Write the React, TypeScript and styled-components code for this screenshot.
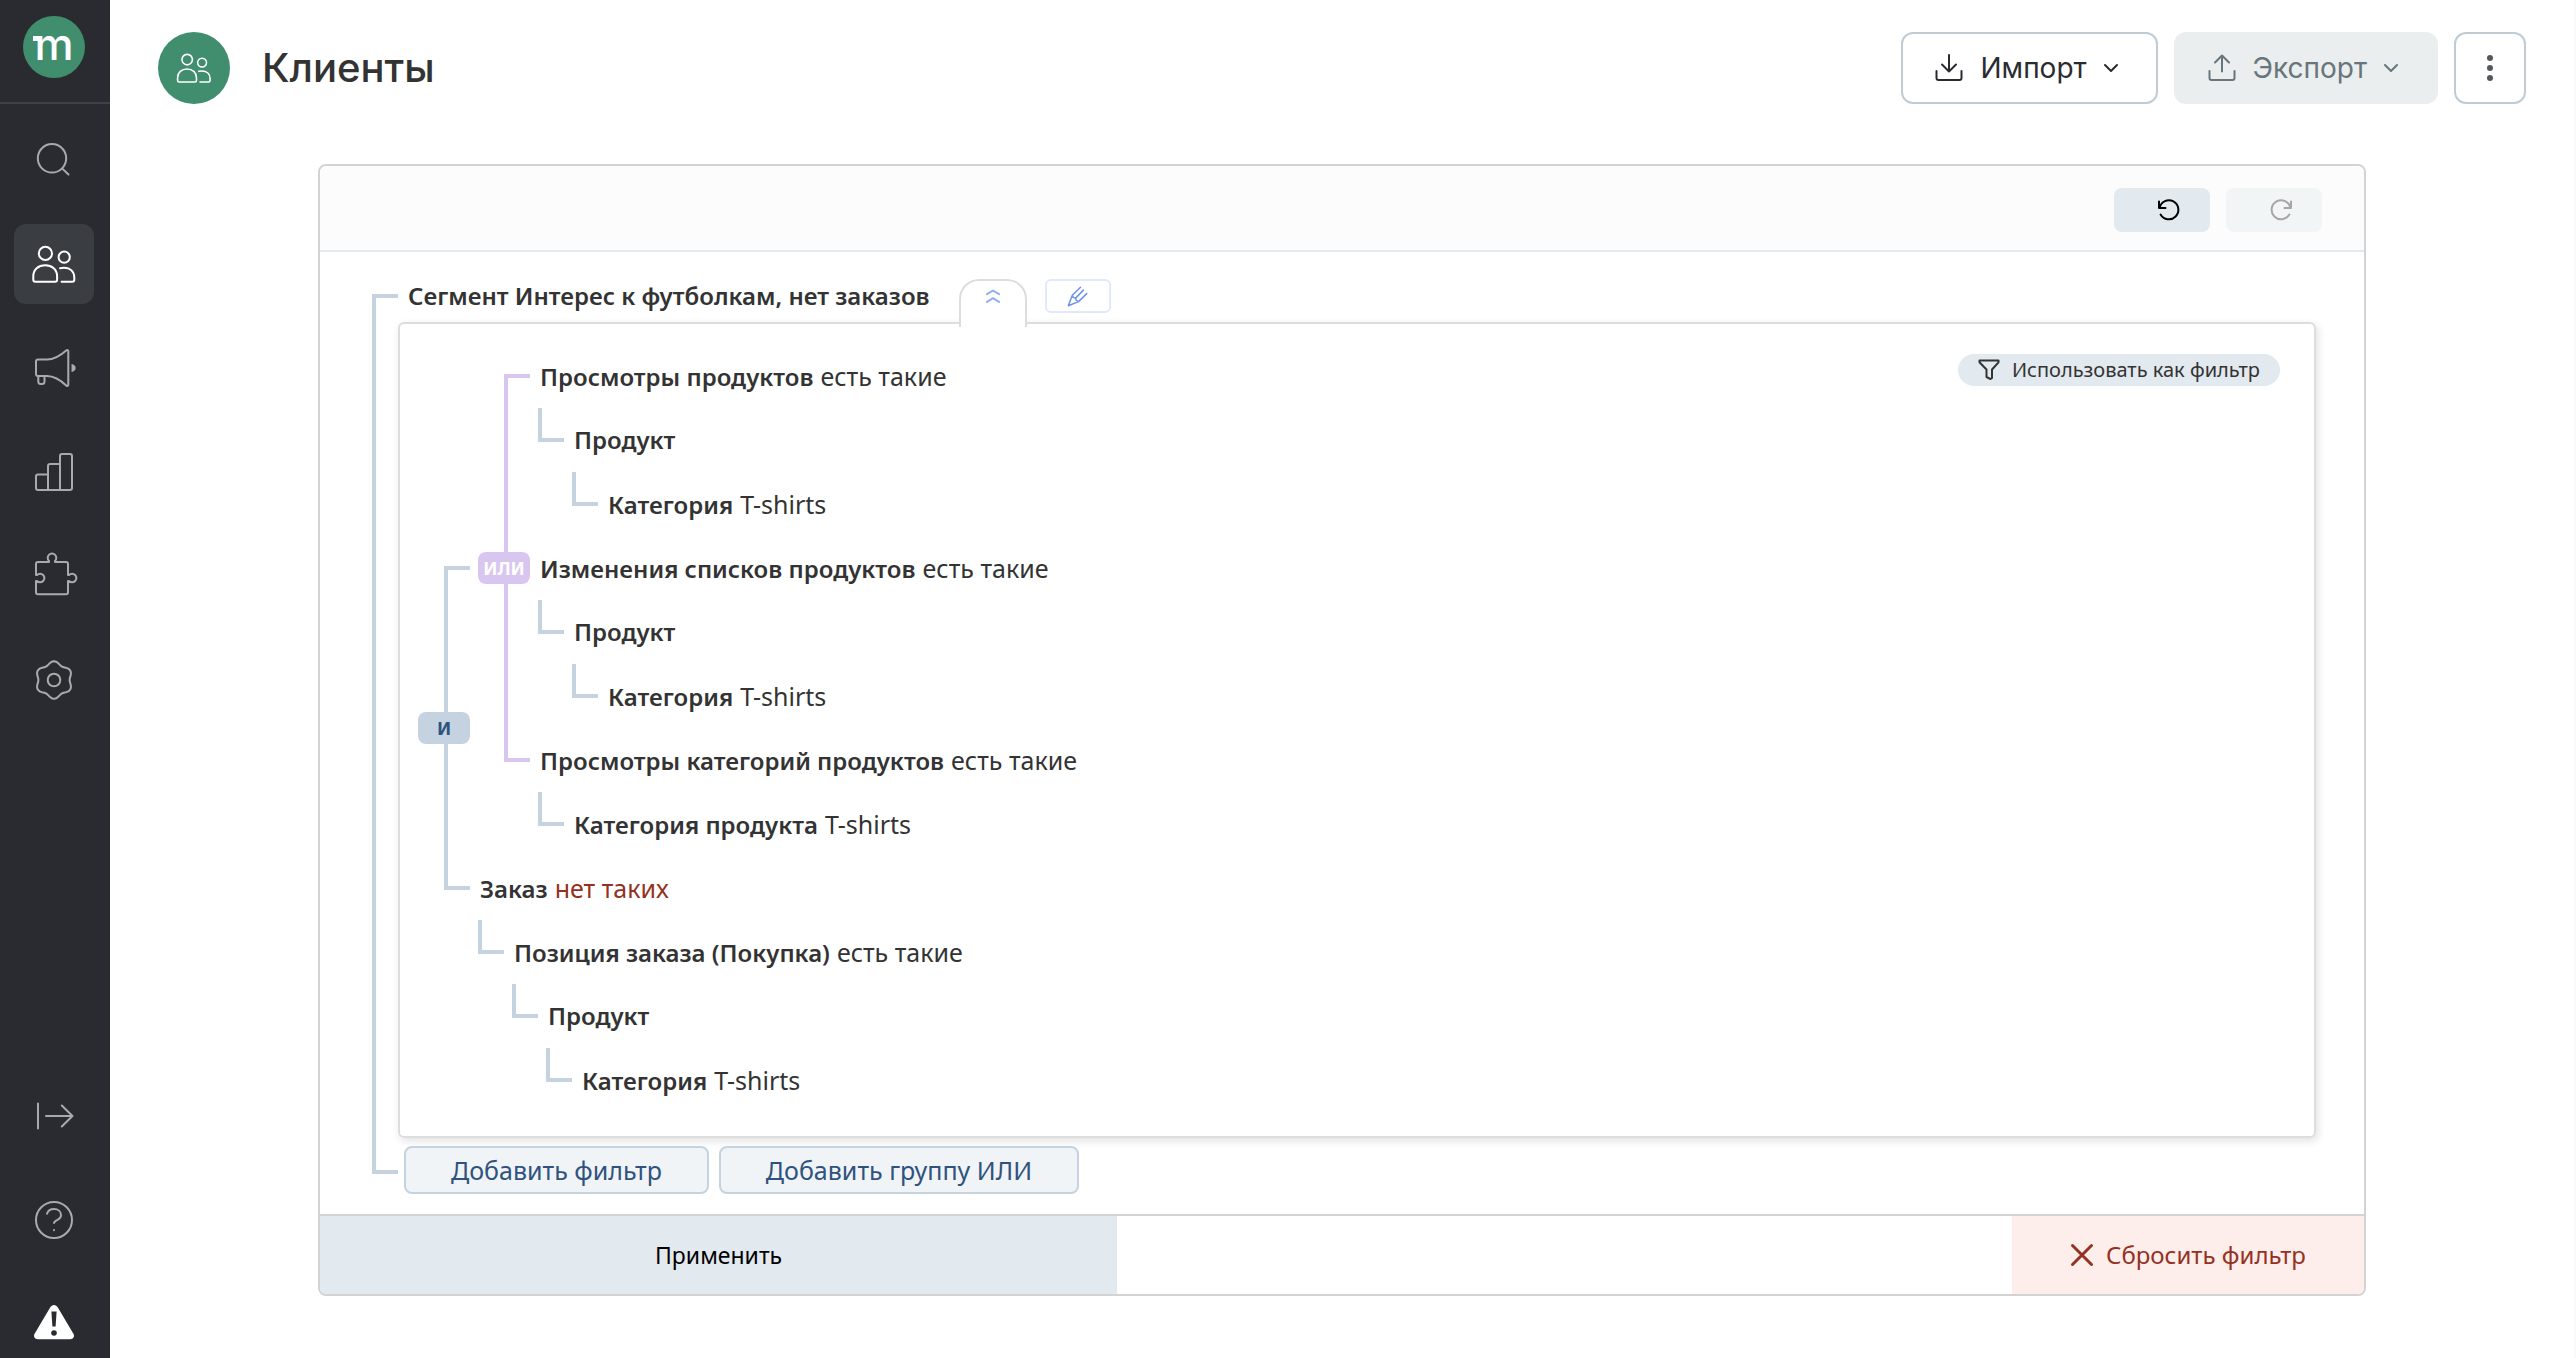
import React, { Fragment } from 'react';
import styled, { createGlobalStyle } from 'styled-components';

const ROW = 64;

const color = {
  ink: '#333333',
  line: '#c5d3e0',
  or: '#d9c6f0',
  blue: '#2f537e',
  mist: '#e2e9ef',
  danger: '#943123',
  green: '#418e6f',
};

const GlobalStyle = createGlobalStyle`
  * { box-sizing: border-box; }
  body { margin: 0; background: #fff; color: ${color.ink}; }
  button { font: inherit; color: inherit; border: 0; margin: 0; padding: 0; cursor: pointer; }
`;

const ui = `Inter, Roboto, sans-serif`;
const text = `"Noto Sans", "Open Sans", sans-serif`;

const Shell = styled.div`
  display: flex;
  min-height: 100vh;
  font: 400 24px/32px ${text};
`;

/* ---------- sidebar ---------- */

const Sidebar = styled.nav`
  display: flex;
  flex-direction: column;
  flex: none;
  width: 110px;
  background: #2a2b30;
`;

const LogoBar = styled.div`
  height: 104px;
  padding: 16px 0 0 23px;
  border-bottom: 2px solid #3e4147;
`;

const Logo = styled.a`
  display: flex;
  justify-content: center;
  position: relative;
  width: 62px;
  height: 62px;
  border-radius: 50%;
  background: ${color.green};
  color: #fff;
  font: 500 44px/56px ${ui};
  text-decoration: none;

  &::before {
    content: '';
    position: absolute;
    left: 10px;
    top: 20px;
    width: 8px;
    height: 5px;
    background: #fff;
  }
`;

const NavList = styled.div`
  display: flex;
  flex-direction: column;
  gap: 24px;
  padding: 16px 16px 0 14px;
`;

const NavFoot = styled(NavList)`
  gap: 36px;
  margin-top: auto;
  padding-top: 0;
`;

const NavButton = styled.button<{ $active?: boolean; $short?: boolean }>`
  display: grid;
  place-items: center;
  height: ${(p) => (p.$short ? 68 : 80)}px;
  border-radius: 12px;
  background: ${(p) => (p.$active ? '#3a3d42' : 'transparent')};
  color: ${(p) => (p.$active ? '#fff' : '#a8aaad')};
`;

const Icon = styled.svg<{ $size: number }>`
  display: block;
  flex: none;
  width: ${(p) => p.$size}px;
  height: ${(p) => p.$size}px;
  fill: none;
  stroke: currentColor;
  stroke-width: 2;
  stroke-linecap: round;
  stroke-linejoin: round;
`;

const gearPath =
  Array.from({ length: 72 }, (_, i) => {
    const a = (i / 72) * Math.PI * 2;
    const r = 17.2 + 1.6 * Math.cos(6 * a);
    return `${i ? 'L' : 'M'}${(24 + r * Math.sin(a)).toFixed(2)} ${(24 - r * Math.cos(a)).toFixed(2)}`;
  }).join('') + 'Z';

const glyphs = {
  search: (
    <>
      <circle cx="22" cy="22.3" r="14.2" />
      <path d="M32.3 32.6 38.5 38.5" />
    </>
  ),
  people: (
    <>
      <circle cx="15.4" cy="13.4" r="6.6" />
      <path d="M5.3 41.7h19.8a2 2 0 0 0 2-2v-3.5c0-6.6-5-10.9-11.9-10.9S3.3 29.6 3.3 36.2v3.5a2 2 0 0 0 2 2Z" />
      <circle cx="34.2" cy="17.2" r="5.6" />
      <path d="M30 28.2c1.3-.4 2.6-.5 4-.5 6.2 0 10.3 3.9 10.3 9.8v2.2a2 2 0 0 1-2 2H31.6" />
    </>
  ),
  megaphone: (
    <>
      <path d="M8 15.5h9c8 0 14-4.4 19.5-9.3a1.1 1.1 0 0 1 1.8.8v34a1.1 1.1 0 0 1-1.8.8C31 36.5 25 32 17 32H8a2 2 0 0 1-2-2V17.5a2 2 0 0 1 2-2Z" />
      <path d="M8.3 32v5.5a2.5 2.5 0 0 0 2.5 2.5h1.2a2.5 2.5 0 0 0 2.5-2.5V32" />
      <path d="M41.5 20c5.5.5 5.5 7.5 0 8Z" fill="currentColor" stroke="none" />
    </>
  ),
  chart: (
    <path d="M18 42V18a2 2 0 0 1 2-2h10M30 42V8a2 2 0 0 1 2-2h8a2 2 0 0 1 2 2v32a2 2 0 0 1-2 2H8a2 2 0 0 1-2-2V28.5a2 2 0 0 1 2-2h10" />
  ),
  puzzle: (
    <path d="M8 10h11V9a4.3 4.3 0 1 1 6 0v1h11a2 2 0 0 1 2 2v11h1a4.3 4.3 0 1 1 0 6h-1v11.3a2 2 0 0 1-2 2H8a2 2 0 0 1-2-2V29h1a4.3 4.3 0 1 0 0-6H6V12a2 2 0 0 1 2-2Z" />
  ),
  gear: (
    <>
      <path d={gearPath} />
      <circle cx="24" cy="24" r="6.3" />
    </>
  ),
  expand: <path d="M8 11.5v25M16 24h26.5M31.8 13.5 42.5 24 31.8 34.5" />,
  help: (
    <>
      <circle cx="24" cy="24" r="18" />
      <path d="M17 17.8c1-3 3.700-4.800 7-4.800 4 0 7 2.400 7 6.100 0 4.300-3.600 4.600-5.600 6-.8.6-1.200 1-1.400 1.900M24 34v.2" />
    </>
  ),
  warning: (
    <>
      <path
        d="M20.3 7.2a4.3 4.3 0 0 1 7.4 0L43.4 33.7c1.6 2.7-.3 5.500-3.300 5.500H7.900c-3 0-4.900-2.800-3.300-5.500Z"
        fill="#fff"
        stroke="none"
      />
      <path d="M21.4 11.5h5.200l-1 15h-3.200Z" fill="#2a2b30" stroke="none" />
      <circle cx="24" cy="33" r="2.8" fill="#2a2b30" stroke="none" />
    </>
  ),
};

type GlyphName = keyof typeof glyphs;

const Glyph = ({ name, size = 48 }: { name: GlyphName; size?: number }) => (
  <Icon $size={size} viewBox="0 0 48 48" aria-hidden="true">
    {glyphs[name]}
  </Icon>
);

const mainNav: { name: GlyphName; label: string; active?: boolean }[] = [
  { name: 'search', label: 'Поиск' },
  { name: 'people', label: 'Клиенты', active: true },
  { name: 'megaphone', label: 'Кампании' },
  { name: 'chart', label: 'Отчёты' },
  { name: 'puzzle', label: 'Интеграции' },
  { name: 'gear', label: 'Настройки' },
];

const footNav: { name: GlyphName; label: string }[] = [
  { name: 'expand', label: 'Развернуть меню' },
  { name: 'help', label: 'Помощь' },
  { name: 'warning', label: 'Предупреждения' },
];

/* ---------- header ---------- */

const Main = styled.main`
  flex: 1;
  min-width: 0;
  border-right: 2px solid #fafafa;
`;

const Header = styled.header`
  display: flex;
  align-items: center;
  gap: 16px;
  padding: 32px 48px 0;
  font-family: ${ui};
`;

const HeaderBadge = styled.span`
  display: grid;
  place-items: center;
  width: 72px;
  height: 72px;
  border-radius: 50%;
  background: ${color.green};
  color: #fff;
`;

const Title = styled.h1`
  margin: 0 auto 0 16px;
  font: 500 40px/48px ${ui};
`;

const HeaderButton = styled.button<{ $muted?: boolean; $square?: boolean }>`
  display: flex;
  align-items: center;
  justify-content: ${(p) => (p.$square ? 'center' : 'flex-start')};
  gap: 17px;
  height: 72px;
  width: ${(p) => (p.$square ? '72px' : 'auto')};
  padding: ${(p) => (p.$square ? '0' : '0 38px 0 32px')};
  border: 2px solid ${(p) => (p.$muted ? '#eaeeef' : '#bfccd6')};
  border-radius: 12px;
  background: ${(p) => (p.$muted ? '#eaeeef' : '#fff')};
  color: ${(p) => (p.$muted ? '#68757b' : '#2a2b30')};
  font-size: 28px;
  line-height: 36px;
`;

const Tray = ({ up }: { up?: boolean }) => (
  <Icon $size={28} viewBox="0 0 28 28" aria-hidden="true">
    <path d="M1.5 17v7a2 2 0 0 0 2 2h21a2 2 0 0 0 2-2v-7" />
    <path d={up ? 'M14 17.5V1.500M7 8.500l7-7 7 7' : 'M14 1v16.500M7 10.500l7 7 7-7'} />
  </Icon>
);

const Chevron = () => (
  <Icon $size={14} viewBox="0 0 14 14" aria-hidden="true">
    <path d="M1 4l6 6 6-6" />
  </Icon>
);

/* ---------- filter panel ---------- */

const Panel = styled.section`
  max-width: 2048px;
  margin: 60px auto 0;
  border: 2px solid #d3d3d3;
  border-radius: 8px;
  overflow: hidden;
`;

const Toolbar = styled.div`
  display: flex;
  justify-content: flex-end;
  gap: 16px;
  padding: 22px 42px 18px;
  border-bottom: 2px solid ${color.mist};
  background: #fcfcfc;
`;

const HistoryButton = styled.button`
  display: grid;
  place-items: center;
  width: 96px;
  height: 44px;
  padding-left: 14px;
  border-radius: 8px;
  background: ${color.mist};
  color: #000;

  &:disabled {
    background: #f2f5f6;
    color: #a6a6a6;
  }
`;

const Turn = ({ redo }: { redo?: boolean }) => (
  <Icon $size={24} viewBox="0 0 24 24" aria-hidden="true">
    <g transform={redo ? 'translate(24 0) scale(-1 1)' : undefined}>
      <path d="M2 3.500v6.500h6.500M2.600 9.700A9.500 9.500 0 1 1 3.600 16.500" />
    </g>
  </Icon>
);

const Body = styled.div`
  display: flex;
  padding: 0 48px 0 52px;
`;

const Bracket = styled.div<{ $or?: boolean }>`
  position: relative;
  flex: none;
  width: 26px;
  border: 4px solid ${(p) => (p.$or ? color.or : color.line)};
  border-right: 0;
`;

const RootBracket = styled(Bracket)`
  margin: 42px 0 40px;
`;

const Segment = styled.div`
  flex: 1;
  min-width: 0;
`;

const SegmentHead = styled.div`
  display: flex;
  align-items: flex-start;
  height: 70px;
  padding: 27px 0 0 10px;
`;

const SegmentTitle = styled.h2`
  margin: 0 29px 0 0;
  font: 600 24px/34px ${text};
`;

const CollapseTab = styled.button`
  display: flex;
  justify-content: center;
  position: relative;
  width: 68px;
  height: 48px;
  padding-top: 8px;
  margin-right: 18px;
  border: 2px solid #dddddd;
  border-bottom: 0;
  border-radius: 20px 20px 0 0;
  background: #fff;
  color: #8fb0ee;
`;

const EditButton = styled.button`
  display: grid;
  place-items: center;
  width: 66px;
  height: 34px;
  border: 2px solid #e0eafc;
  border-radius: 6px;
  background: #fff;
  color: #6b93e6;
`;

const Card = styled.div`
  display: flex;
  justify-content: space-between;
  align-items: flex-start;
  padding: 20px 34px 24px 18px;
  border: 2px solid #dddddd;
  border-radius: 6px;
  box-shadow: 2px 3px 8px rgba(0, 0, 0, 0.12);
`;

const UseAsFilter = styled.button`
  display: flex;
  align-items: center;
  gap: 12px;
  height: 32px;
  margin-top: 10px;
  padding: 0 20px;
  border-radius: 16px;
  background: ${color.mist};
  font-size: 20px;
  line-height: 32px;
`;

const Group = styled.div`
  display: flex;
  gap: 8px;
`;

const Gutter = styled.div`
  display: flex;
  justify-content: flex-end;
  align-items: flex-start;
  width: 52px;
`;

const Operator = styled.span<{ $or?: boolean }>`
  position: absolute;
  right: 0;
  top: calc(50% - 16px);
  width: 52px;
  height: 32px;
  border-radius: 8px;
  background: ${(p) => (p.$or ? color.or : color.line)};
  color: ${(p) => (p.$or ? '#fff' : color.blue)};
  font: 700 18px/32px ${text};
  text-align: center;
`;

const Elbow = styled.span`
  flex: none;
  width: 26px;
  height: 34px;
  border: solid ${color.line};
  border-width: 0 0 4px 4px;
`;

const Condition = styled.div`
  display: flex;
  align-items: baseline;
  gap: 7px;
  height: ${ROW}px;
  padding: 16px 0 0 2px;
  white-space: nowrap;
  font: 400 25px/32px ${text};
`;

const Field = styled.b`
  font-size: 24px;
  font-weight: 600;
`;

const Value = styled.span<{ $negative?: boolean }>`
  color: ${(p) => (p.$negative ? color.danger : 'inherit')};
`;

type Item = {
  op?: 'И' | 'ИЛИ';
  name?: string;
  value?: string;
  negative?: boolean;
  items?: Item[];
};

const tree: Item = {
  op: 'И',
  items: [
    {
      op: 'ИЛИ',
      items: [
        {
          name: 'Просмотры продуктов',
          value: 'есть такие',
          items: [{ name: 'Продукт', items: [{ name: 'Категория', value: 'T-shirts' }] }],
        },
        {
          name: 'Изменения списков продуктов',
          value: 'есть такие',
          items: [{ name: 'Продукт', items: [{ name: 'Категория', value: 'T-shirts' }] }],
        },
        {
          name: 'Просмотры категорий продуктов',
          value: 'есть такие',
          items: [{ name: 'Категория продукта', value: 'T-shirts' }],
        },
      ],
    },
    {
      name: 'Заказ',
      value: 'нет таких',
      negative: true,
      items: [
        {
          name: 'Позиция заказа (Покупка)',
          value: 'есть такие',
          items: [{ name: 'Продукт', items: [{ name: 'Категория', value: 'T-shirts' }] }],
        },
      ],
    },
  ],
};

/* Rows an item takes up, its own line included. */
const rowsOf = (item: Item): number =>
  (item.op ? 0 : 1) + (item.items ?? []).reduce((sum, child) => sum + rowsOf(child), 0);

/* First and last row that a group's bracket joins. */
const spanOf = (item: Item): [number, number] => {
  const items = item.items ?? [];
  const last = items[items.length - 1];
  return [anchorOf(items[0]), rowsOf(item) - rowsOf(last) + anchorOf(last)];
};

/* Row, counted from an item's top, at which its parent's bracket meets it. */
const anchorOf = (item: Item): number => {
  if (!item.op) return 0;
  const [from, to] = spanOf(item);
  return (from + to) / 2;
};

const Tree = ({ item }: { item: Item }) => {
  if (item.op) {
    const [from, to] = spanOf(item);
    const or = item.op === 'ИЛИ';
    return (
      <Group>
        <Gutter>
          <Bracket
            $or={or}
            style={{ marginTop: from * ROW + ROW / 2 - 2, height: (to - from) * ROW + 4 }}
          >
            <Operator $or={or}>{item.op}</Operator>
          </Bracket>
        </Gutter>
        <div>
          {item.items?.map((child, i) => (
            <Tree key={i} item={child} />
          ))}
        </div>
      </Group>
    );
  }
  return (
    <div>
      <Condition>
        <Field>{item.name}</Field>
        {item.value && <Value $negative={item.negative}>{item.value}</Value>}
      </Condition>
      {item.items?.map((child, i) => (
        <Group key={i}>
          <Elbow />
          <Tree item={child} />
        </Group>
      ))}
    </div>
  );
};

const AddRow = styled.div`
  display: flex;
  gap: 10px;
  padding: 8px 0 20px 6px;
`;

const AddButton = styled.button`
  height: 48px;
  padding: 0 45px;
  border: 2px solid ${color.line};
  border-radius: 8px;
  background: #f0f4f7;
  color: ${color.blue};
  font-size: 25px;
  line-height: 32px;
`;

const Footer = styled.footer`
  display: flex;
  justify-content: space-between;
  height: 80px;
  border-top: 2px solid #d3d3d3;
`;

const Apply = styled.button`
  width: 39%;
  background: ${color.mist};
  color: #000;
  font-size: 23px;
`;

const Reset = styled.button`
  display: flex;
  align-items: center;
  justify-content: center;
  gap: 12px;
  width: 352px;
  background: #fdeeeb;
  color: ${color.danger};
  font-size: 24px;
`;

export default function App() {
  return (
    <Fragment>
      <GlobalStyle />
      <Shell>
        <Sidebar>
          <LogoBar>
            <Logo href="#">m</Logo>
          </LogoBar>
          <NavList>
            {mainNav.map((n) => (
              <NavButton key={n.name} $active={n.active} aria-label={n.label}>
                <Glyph name={n.name} />
              </NavButton>
            ))}
          </NavList>
          <NavFoot>
            {footNav.map((n) => (
              <NavButton key={n.name} $short aria-label={n.label}>
                <Glyph name={n.name} />
              </NavButton>
            ))}
          </NavFoot>
        </Sidebar>
        <Main>
          <Header>
            <HeaderBadge>
              <Glyph name="people" size={38} />
            </HeaderBadge>
            <Title>Клиенты</Title>
            <HeaderButton>
              <Tray />
              Импорт
              <Chevron />
            </HeaderButton>
            <HeaderButton $muted>
              <Tray up />
              Экспорт
              <Chevron />
            </HeaderButton>
            <HeaderButton $square aria-label="Ещё">
              <Icon $size={28} viewBox="0 0 28 28" aria-hidden="true">
                <g fill="#55585b" stroke="none">
                  <circle cx="14" cy="4" r="3" />
                  <circle cx="14" cy="14" r="3" />
                  <circle cx="14" cy="24" r="3" />
                </g>
              </Icon>
            </HeaderButton>
          </Header>
          <Panel>
            <Toolbar>
              <HistoryButton aria-label="Отменить">
                <Turn />
              </HistoryButton>
              <HistoryButton disabled aria-label="Повторить">
                <Turn redo />
              </HistoryButton>
            </Toolbar>
            <Body>
              <RootBracket />
              <Segment>
                <SegmentHead>
                  <SegmentTitle>Сегмент Интерес к футболкам, нет заказов</SegmentTitle>
                  <CollapseTab aria-label="Свернуть">
                    <Icon $size={14} viewBox="0 0 14 14" aria-hidden="true">
                      <path d="M1 5.200 7 1.500l6 3.700M1 12.900l6-3.700 6 3.700" />
                    </Icon>
                  </CollapseTab>
                  <EditButton aria-label="Изменить">
                    <Icon $size={21} viewBox="0 0 21 21" aria-hidden="true">
                      <path
                        d="M13.500 1.300 5.300 9.300 1.300 19.700 11.500 15.600 19.700 7.600M5.300 9.300l1 2.200 2.200.600.700 2.300 2.300 1.200M8.500 12.100 16.500 4.100"
                        strokeWidth="1.500"
                      />
                    </Icon>
                  </EditButton>
                </SegmentHead>
                <Card>
                  <Tree item={tree} />
                  <UseAsFilter>
                    <Icon $size={22} viewBox="0 0 22 22" aria-hidden="true">
                      <path d="M1.500 1.500h19v1.800L14 10.500v8.500l-1.500 1L8.500 18v-7.500L1.500 3.300Z" />
                    </Icon>
                    Использовать как фильтр
                  </UseAsFilter>
                </Card>
                <AddRow>
                  <AddButton>Добавить фильтр</AddButton>
                  <AddButton>Добавить группу ИЛИ</AddButton>
                </AddRow>
              </Segment>
            </Body>
            <Footer>
              <Apply>Применить</Apply>
              <Reset>
                <Icon $size={24} viewBox="0 0 24 24" aria-hidden="true">
                  <path d="M2.500 2.500l19 19M21.500 2.500l-19 19" strokeWidth="3" />
                </Icon>
                Сбросить фильтр
              </Reset>
            </Footer>
          </Panel>
        </Main>
      </Shell>
    </Fragment>
  );
}
